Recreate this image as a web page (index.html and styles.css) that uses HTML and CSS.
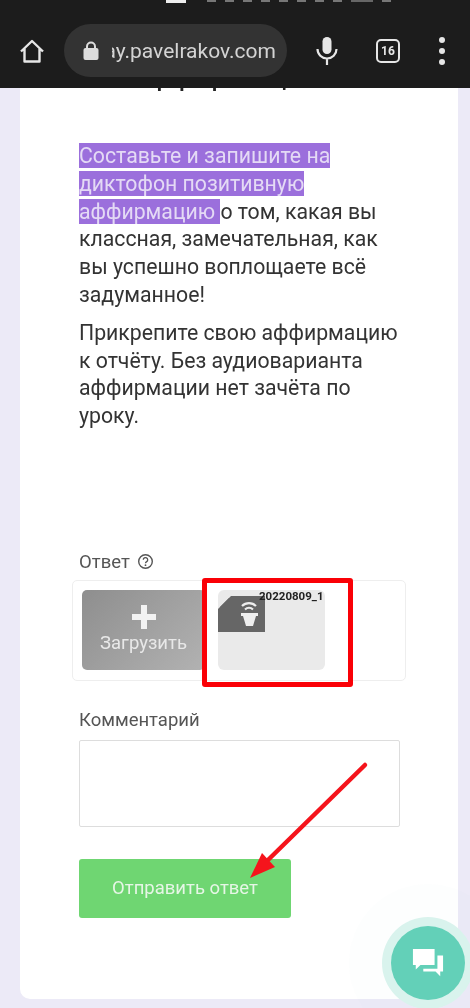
FILE: index.html
```html
<!DOCTYPE html>
<html lang="ru">
<head>
    <meta charset="UTF-8">
    <meta name="viewport" content="width=device-width, initial-scale=1.0">
    <title>Задание</title>
    <link rel="stylesheet" href="styles.css">
</head>
<body>
    <div class="screen">
        <div class="browser-bar">
            <div class="status-row">
                <span class="st st-white"></span>
                <span class="st"></span>
                <span class="st"></span>
                <span class="st"></span>
                <span class="st"></span>
                <span class="st"></span>
                <span class="st"></span>
                <span class="st"></span>
                <span class="st"></span>
                <span class="st st-wide"></span>
                <span class="st"></span>
            </div>
            <div class="toolbar">
                <svg class="home-icon" width="26" height="26" viewBox="0 0 26 26">
                    <path d="M2 13.500 13 3l11 10.500M5.500 10.500V23.500h15V10.500" fill="none" stroke="#e6e6e6" stroke-width="2.400" stroke-linejoin="round"/>
                </svg>
                <div class="url-box">
                    <svg width="18" height="22" viewBox="0 0 18 22">
                        <path d="M5 9V6.500a4 4 0 0 1 8 0V9" fill="none" stroke="#ddd" stroke-width="2"/>
                        <rect x="1.500" y="8" width="15" height="12" rx="2" fill="#ddd"/>
                    </svg>
                    <div class="url-text">ay.pavelrakov.com</div>
                </div>
                <svg class="mic-icon" width="24" height="30" viewBox="0 0 24 30">
                    <rect x="7.500" y="1" width="9" height="17" rx="4.500" fill="#e6e6e6"/>
                    <path d="M2.500 13a9.500 9.500 0 0 0 19 0M12 22.500V29" fill="none" stroke="#e6e6e6" stroke-width="2.200"/>
                </svg>
                <div class="tab-count">16</div>
                <div class="menu-dots"><i></i><i></i><i></i></div>
            </div>
        </div>

        <div class="card">
            <div class="cut-title"><h2>Аффирмация</h2></div>

            <div class="lesson-text">
                <p><span class="marked">Составьте и запишите на диктофон позитивную аффирмацию </span>о том, какая вы классная, замечательная, как вы успешно воплощаете всё задуманное!</p>
                <p>Прикрепите свою аффирмацию к отчёту. Без аудиоварианта аффирмации нет зачёта по уроку.</p>
            </div>

            <div class="field-label answer-label">
                Ответ
                <svg width="17" height="17" viewBox="0 0 17 17">
                    <circle cx="8.500" cy="8.500" r="6.800" fill="none" stroke="#555" stroke-width="1.400"/>
                    <path d="M6.300 6.800a2.200 2.200 0 1 1 3.400 1.800c-.8.500-1.200 1-1.200 1.700" fill="none" stroke="#555" stroke-width="1.300"/>
                    <circle cx="8.500" cy="12.200" r=".9" fill="#555"/>
                </svg>
            </div>

            <div class="upload-box">
                <div class="upload-btn">
                    <span class="plus"></span>
                    <span>Загрузить</span>
                </div>
                <div class="file-tile">
                    <div class="file-icon">
                        <svg width="47" height="36" viewBox="0 0 47 36">
                            <path d="M13 0H47V36H0V13Z" fill="#666"/>
                            <path d="M11 2V11H2Z" fill="#666"/>
                            <path d="M24 10a10 10 0 0 1 14 0M27 13.500a6 6 0 0 1 8 0" fill="none" stroke="#eee" stroke-width="2.200"/>
                            <path d="M23 17H40V20H38L35 30H28L25 20H23Z" fill="#eee"/>
                        </svg>
                    </div>
                    <div class="file-name">20220809_103412</div>
                </div>
            </div>

            <div class="field-label comment-label">Комментарий</div>
            <div class="comment-box"></div>

            <div class="send-btn">Отправить ответ</div>
        </div>

        <!-- Annotations drawn over the screenshot -->
        <div class="red-frame"></div>
        <svg class="red-arrow" width="140" height="140" viewBox="0 0 140 140">
            <path d="M119 8 22 103" stroke="#f5141c" stroke-width="4.500" stroke-linecap="round"/>
            <path d="M4 121 16 96 29 110Z" fill="#f5141c"/>
        </svg>

        <div class="chat-fab">
            <svg width="34" height="32" viewBox="0 0 36 34">
                <path d="M2 2H25V19H10L5 24V19H2Z" fill="#fff"/>
                <path d="M28 9H34V26H31V31L26 26H13V23H28Z" fill="#fff"/>
            </svg>
        </div>
    </div>
</body>
</html>
```

FILE: styles.css
```css
/* Page */
body {
    margin: 0;
    background: #eceaf7;
    font-family: Roboto, Arial, sans-serif;
}

.screen {
    position: relative;
    width: 470px;
    height: 1008px;
    overflow: hidden;
    filter: blur(0.7px);
}

/* Browser chrome */
.browser-bar {
    height: 88px;
    background: #1c1c1c;
}

.status-row {
    display: flex;
    gap: 9px;
    height: 3px;
    padding-left: 198px;
}

.st {
    width: 9px;
    height: 2px;
    background: #777;
}

.st-white {
    width: 20px;
    height: 3px;
    margin-left: -32px;
    margin-right: 12px;
    background: #eee;
}

.st-wide {
    width: 22px;
    background: #666;
}

.toolbar {
    display: flex;
    align-items: center;
    height: 53px;
    margin-top: 21px;
    padding-left: 19px;
}

.home-icon {
    flex: none;
}

.url-box {
    display: flex;
    align-items: center;
    width: 223px;
    height: 53px;
    margin-left: 19px;
    padding-left: 18px;
    box-sizing: border-box;
    background: #333;
    border-radius: 27px;
}

.url-text {
    width: 164px;
    margin-left: 12px;
    overflow: hidden;
    direction: rtl;
    white-space: nowrap;
    font-size: 21px;
    color: #d4d4d4;
}

.mic-icon {
    margin-left: 28px;
    flex: none;
}

.tab-count {
    width: 20px;
    height: 20px;
    margin-left: 37px;
    border: 2px solid #e6e6e6;
    border-radius: 5px;
    text-align: center;
    font-size: 12px;
    font-weight: 700;
    line-height: 20px;
    color: #e6e6e6;
}

.menu-dots {
    display: flex;
    flex-direction: column;
    gap: 5px;
    margin-left: 39px;
}

.menu-dots i {
    width: 6px;
    height: 6px;
    border-radius: 50%;
    background: #e6e6e6;
}

/* Lesson card */
.card {
    width: 438px;
    height: 911px;
    margin-left: 20px;
    padding-left: 59px;
    box-sizing: border-box;
    background: #fff;
    border-radius: 0 0 10px 10px;
}

.cut-title {
    height: 5px;
    overflow: hidden;
}

.cut-title h2 {
    margin: -31px 0 0 49px;
    font-size: 31px;
    line-height: 36px;
    font-weight: 400;
    color: #222;
}

.lesson-text {
    width: 324px;
    margin-top: 49px;
    font-size: 21.250px;
    line-height: 27.800px;
    color: #333;
}

.lesson-text p {
    margin: 0 0 10px;
}

.marked {
    background: #9b6fdc;
    color: #e4daf5;
}

.field-label {
    font-size: 18.500px;
    color: #555;
}

.answer-label {
    display: flex;
    align-items: center;
    gap: 7px;
    margin-top: 120px;
    height: 24px;
}

.upload-box {
    display: flex;
    gap: 13px;
    width: 334px;
    height: 101px;
    margin: 6px 0 0 -7px;
    padding: 9px;
    box-sizing: border-box;
    border: 1px solid #eee;
    border-radius: 5px;
}

.upload-btn {
    display: flex;
    flex-direction: column;
    align-items: center;
    justify-content: center;
    gap: 3px;
    width: 123px;
    height: 80px;
    background: linear-gradient(135deg, #8e8e8e, #b2b2b2);
    border-radius: 5px;
    font-size: 18.500px;
    color: #e8e8e8;
}

.plus {
    position: relative;
    width: 24px;
    height: 24px;
}

.plus::before,
.plus::after {
    content: "";
    position: absolute;
    background: #f2f2f2;
}

.plus::before {
    left: 9px;
    top: 0;
    width: 6px;
    height: 24px;
}

.plus::after {
    left: 0;
    top: 9px;
    width: 24px;
    height: 6px;
}

.file-tile {
    position: relative;
    width: 107px;
    height: 80px;
    background: #eaeaea;
    border-radius: 6px;
}

.file-icon {
    position: absolute;
    left: 0;
    top: 6px;
    height: 36px;
}

.file-name {
    position: absolute;
    left: 41px;
    top: -1px;
    width: 64px;
    overflow: hidden;
    white-space: nowrap;
    font-size: 11.500px;
    font-weight: 700;
    line-height: 14px;
    color: #222;
}

.comment-label {
    margin-top: 28px;
    height: 22px;
}

.comment-box {
    width: 321px;
    height: 87px;
    margin-top: 9px;
    box-sizing: border-box;
    border: 1px solid #ddd;
    border-radius: 2px;
}

.send-btn {
    width: 212px;
    height: 59px;
    margin-top: 32px;
    background: #6fd672;
    border-radius: 3px;
    text-align: center;
    font-size: 18.500px;
    line-height: 59px;
    color: #e6f6e6;
}

/* Overlays */
.red-frame {
    position: absolute;
    left: 202px;
    top: 578px;
    width: 141px;
    height: 99px;
    border: 5px solid #fa0006;
    border-radius: 3px;
}

.red-arrow {
    position: absolute;
    left: 246px;
    top: 757px;
}

.chat-fab {
    position: absolute;
    left: 391px;
    top: 926px;
    display: flex;
    align-items: center;
    justify-content: center;
    width: 74px;
    height: 74px;
    background: #63d0b8;
    border-radius: 50%;
    box-shadow: 0 0 0 9px #d9f3ed, 0 0 0 42px rgba(99, 208, 184, 0.015);
}
```
